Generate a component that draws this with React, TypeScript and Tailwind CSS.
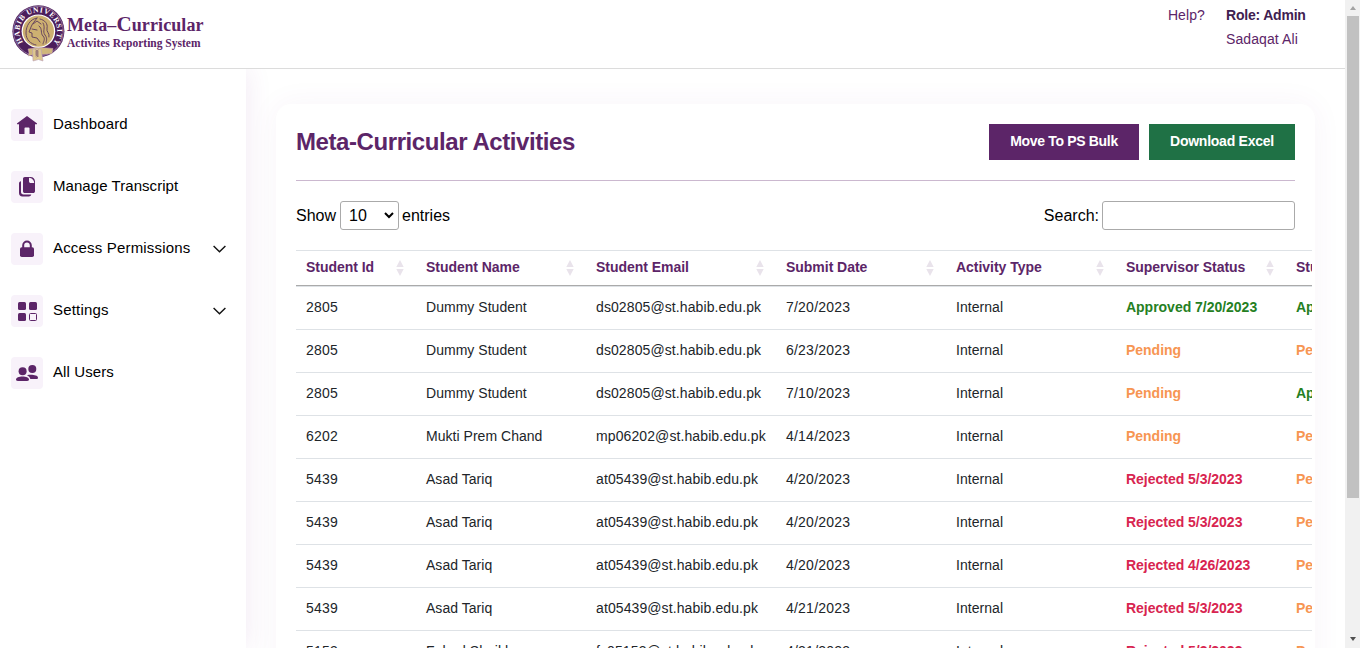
import React from "react";

const activities = [
  ["2805", "Dummy Student", "ds02805@st.habib.edu.pk", "7/20/2023", "Approved 7/20/2023", "Approved"],
  ["2805", "Dummy Student", "ds02805@st.habib.edu.pk", "6/23/2023", "Pending", "Pending"],
  ["2805", "Dummy Student", "ds02805@st.habib.edu.pk", "7/10/2023", "Pending", "Approved"],
  ["6202", "Mukti Prem Chand", "mp06202@st.habib.edu.pk", "4/14/2023", "Pending", "Pending"],
  ["5439", "Asad Tariq", "at05439@st.habib.edu.pk", "4/20/2023", "Rejected 5/3/2023", "Pending"],
  ["5439", "Asad Tariq", "at05439@st.habib.edu.pk", "4/20/2023", "Rejected 5/3/2023", "Pending"],
  ["5439", "Asad Tariq", "at05439@st.habib.edu.pk", "4/20/2023", "Rejected 4/26/2023", "Pending"],
  ["5439", "Asad Tariq", "at05439@st.habib.edu.pk", "4/21/2023", "Rejected 5/3/2023", "Pending"],
  ["5153", "Fahad Shaikh", "fs05153@st.habib.edu.pk", "4/21/2023", "Rejected 5/3/2023", "Pending"],
];

const headings = ["Student Id", "Student Name", "Student Email", "Submit Date", "Activity Type", "Supervisor Status", "Student"];
const columns = "grid grid-cols-[120px_170px_190px_170px_170px_170px_170px]";

function statusColor(status: string) {
  if (status.startsWith("Approved")) return "text-[#25801f]";
  if (status.startsWith("Rejected")) return "text-[#d82450]";
  return "text-[#f79552]";
}

function Crest() {
  return (
    <svg width="54" height="60" viewBox="0 0 54 60" className="shrink-0">
      <defs>
        <path id="crest-ring" d="M11.2 38.2 A18.8 18.8 0 1 1 41.6 38.2" />
      </defs>
      <circle cx="26.4" cy="27.2" r="26" fill="#4c1e5b" />
      <circle cx="26.4" cy="27.2" r="24.9" fill="none" stroke="#cdb7d4" strokeWidth=".5" />
      <circle cx="26.4" cy="27.2" r="16.8" fill="#fff" />
      <circle cx="26.4" cy="27.2" r="15.6" fill="#cdb071" />
      <text fill="#fff" fontSize="7.6" fontFamily="Liberation Serif, serif" fontWeight="700" letterSpacing=".6">
        <textPath href="#crest-ring">HABIB UNIVERSITY</textPath>
      </text>
      <g fill="none" stroke="#5c3a5b" strokeWidth=".9" strokeLinecap="round" strokeLinejoin="round">
        <path d="M25 14C18 15 14 22 14 29c0 7 5 11 10 12M25 14c-2 3-5 6-6 9l-2 5 3 1v4l5 1 3 4" />
        <path d="M21 20l4-3 4 3M20 25l5 1M28 15c5 1 8 5 7 9s3 5 2 9M31 19c3 5-1 8 2 12s1 6 1 8M27 22c4 3 1 7 4 10s0 6 0 8" />
      </g>
      <path d="M16 45c8-2 16-1.500 25-.5l-1 5-9 1c-6-.5-11 0-15 1.500l1-3z" fill="#d0b77b" stroke="#c4a0b8" strokeWidth=".5" />
      <path d="M20.500 45h8.500l2 12-4.500-1.500-5.500 1.500z" fill="#dec88f" stroke="#bba0b7" strokeWidth=".6" />
      <path d="M23.500 46l3 2-3 2 3 2-2 1M26.500 46l-3 2 3 2-3 2" stroke="#6a4267" strokeWidth=".6" fill="none" />
    </svg>
  );
}

function NavIcon({ name }: { name: string }) {
  return (
    <span className="flex size-8 shrink-0 items-center justify-center rounded bg-[#f8f2fa]">
      <svg width="32" height="32" viewBox="0 0 32 32" fill="#5c2568">
        {name === "home" && (
          <path d="M16 7 25.800 14.300c.5.4.2 1-.4 1H24V24c0 .7-.4 1-1 1h-4.500v-5.800c0-.5-.3-.8-.8-.8h-3.400c-.5 0-.8.3-.8.8V25H9c-.7 0-1-.4-1-1v-8.700H6.600c-.6 0-.9-.6-.4-1z" />
        )}
        {name === "documents" && (
          <>
            <path d="M13.800 6H18v4.200c0 1.100.7 1.800 1.800 1.800H24v8.200c0 1-.8 1.800-1.800 1.800h-8.400c-1 0-1.800-.8-1.800-1.800V7.800c0-1 .8-1.800 1.800-1.800z" />
            <path d="M18 6h1.500c2.600 0 4.500 2 4.500 4.500V12h-.8c0-2.600-2.200-4.900-5.200-5.200z" />
            <path d="M10 10.200v10.900c0 1.500 1 2.500 2.500 2.500h7.800c-.3 1.300-1.200 2-2.500 2h-6.300c-2.200 0-3.500-1.300-3.500-3.500v-9.700c0-1.200.7-2 2-2.200z" />
          </>
        )}
        {name === "lock" && (
          <>
            <path d="M12.200 15.500v-3.200a3.800 3.800 0 0 1 7.600 0v3.200" fill="none" stroke="#5c2568" strokeWidth="2" />
            <rect x="9" y="14.300" width="14" height="9.700" rx="1.800" />
          </>
        )}
        {name === "grid" && (
          <>
            <rect x="7" y="7" width="8" height="8" rx="1.500" />
            <rect x="18" y="7" width="8" height="8" rx="1.500" />
            <rect x="7" y="18" width="8" height="8" rx="1.500" />
            <rect x="18.500" y="18.500" width="7" height="7" rx="1" fill="none" stroke="#5c2568" />
          </>
        )}
        {name === "users" && (
          <>
            <circle cx="11.600" cy="14.300" r="4" />
            <circle cx="21.300" cy="12" r="4" />
            <path d="M5 22.600c0-2 3-3.100 6.500-3.100s6.500 1.100 6.500 3.100c0 1-.7 1.400-1.800 1.400H6.800C5.700 24 5 23.600 5 22.600z" />
            <path d="M16 18.300c3.500-1 11-.4 11 2.500 0 .8-.6 1.200-1.500 1.200h-6.200c-.4-1.700-1.600-2.900-3.300-3.700z" />
          </>
        )}
      </svg>
    </span>
  );
}

const nav = [
  { label: "Dashboard", icon: "home", tracking: "tracking-[0.16px]" },
  { label: "Manage Transcript", icon: "documents", tracking: "tracking-[0.06px]" },
  { label: "Access Permissions", icon: "lock", expands: true, tracking: "tracking-[0.18px]" },
  { label: "Settings", icon: "grid", expands: true, tracking: "tracking-[0.2px]" },
  { label: "All Users", icon: "users", tracking: "tracking-[0.1px]" },
];

export default function App() {
  return (
    <div className="flex h-[648px] w-[1360px] overflow-hidden bg-white font-['Liberation_Sans',sans-serif] text-black">
      <div className="flex w-[1345px] flex-col">
        <header className="flex h-[69px] shrink-0 justify-between border-b border-[#dcdcdc] pl-3">
          <div className="flex pt-[4px]">
            <Crest />
            <div className="pl-px pt-[9px] font-['Liberation_Serif',serif] font-bold text-[#5c2568]">
              <div className="whitespace-nowrap text-[18px] leading-[22px] tracking-[0.1px]">
                Meta–<span className="text-[21px] leading-[22px]">C</span>urricular
              </div>
              <div className="whitespace-nowrap text-[11.5px] leading-[15px]">Activites Reporting System</div>
            </div>
          </div>
          <div className="flex gap-[21px] whitespace-nowrap pt-[3px] text-sm leading-6 text-[#5c2568]">
            <span className="tracking-[0.1px]">Help?</span>
            <div className="w-[119px]">
              <div className="font-bold tracking-[-0.2px] text-[#402050]">Role: Admin</div>
              <div className="tracking-[0.1px]">Sadaqat Ali</div>
            </div>
          </div>
        </header>
        <div className="flex min-h-0 flex-1 overflow-hidden">
          <nav className="flex w-[246px] shrink-0 flex-col gap-[30px] pl-[11px] pt-10 shadow-[0_0_25px_rgba(130,50,150,0.11)]">
            {nav.map((item) => (
              <a key={item.label} className="flex h-8 items-center text-[15px]">
                <NavIcon name={item.icon} />
                <span className={`flex-1 whitespace-nowrap pb-[2px] pl-[10px] ${item.tracking}`}>{item.label}</span>
                {item.expands && (
                  <svg width="13" height="8" viewBox="0 0 13 8" className="mr-[20px]" fill="none" stroke="#111" strokeWidth="1.4">
                    <path d="m.6.9 5.900 5.900L12.400.9" />
                  </svg>
                )}
              </a>
            ))}
          </nav>
          <main className="min-w-0 flex-1 pl-[30px] pr-[30px] pt-[35px]">
            <section className="h-[700px] w-[1039px] rounded-[15px] bg-white pl-5 pt-5 shadow-[0_0_30px_rgba(120,50,140,0.055)]">
              <div className="flex h-[57px] w-[999px] justify-between border-b border-[#cbb8cf]">
                <h1 className="h-9 whitespace-nowrap text-2xl font-bold leading-9 tracking-[-0.42px] text-[#5c2568]">Meta-Curricular Activities</h1>
                <div className="flex gap-[10px] whitespace-nowrap text-sm font-bold text-white">
                  <button className="h-9 w-[150px] bg-[#5c2568] pb-[2px] tracking-[-0.32px]">Move To PS Bulk</button>
                  <button className="h-9 w-[146px] bg-[#1f7145] pb-[2px] tracking-[-0.25px]">Download Excel</button>
                </div>
              </div>
              <div className="flex w-[999px] items-center justify-between pt-5 text-base">
                <div className="flex items-center">
                  <span className="w-11">Show</span>
                  <span className="flex h-[29px] w-[59px] items-center justify-between rounded-[3px] border border-[#aaa] pl-2 pr-1">
                    10
                    <svg width="10" height="7" viewBox="0 0 10 7" fill="none" stroke="#000" strokeWidth="2">
                      <path d="m1 1 4 4 4-4" />
                    </svg>
                  </span>
                  <span className="pl-[3px]">entries</span>
                </div>
                <label className="flex items-center gap-[3px]">
                  Search:
                  <input className="h-[29px] w-[193px] rounded-[3px] border border-[#aaa]" />
                </label>
              </div>
              <div className="mt-5 w-[1016px] overflow-hidden whitespace-nowrap text-sm">
                <div className={`${columns} h-[36px] w-[1160px] border-b border-t border-b-[#aaa] border-t-[#dee2e6] font-bold text-[#5c2568]`}>
                  {headings.map((heading) => (
                    <div key={heading} className="flex items-center justify-between pl-[10px] pr-[12px]">
                      <span className="pb-[2px] tracking-[-0.03px]">{heading}</span>
                      <svg width="8" height="16" viewBox="0 0 8 16" fill="#e9e3eb" className="shrink-0">
                        <path d="M4 0 7.700 7H.3zM4 16 .3 9h7.400z" />
                      </svg>
                    </div>
                  ))}
                </div>
                <div className="border-t border-[#dee2e6]">
                  {activities.map(([id, name, email, date, supervisor, office], index) => (
                    <div key={index} className={`${columns} h-[43px] w-[1160px] items-center border-b border-[#dee2e6] pb-[2px] text-[#212529]`}>
                      <span className="pl-[10px] tracking-[0.2px]">{id}</span>
                      <span className="pl-[10px] tracking-[0.03px]">{name}</span>
                      <span className="pl-[10px] tracking-[0.1px]">{email}</span>
                      <span className="pl-[10px] tracking-[0.22px]">{date}</span>
                      <span className="pl-[10px] tracking-[0.05px]">Internal</span>
                      <span className={`pl-[10px] font-bold tracking-[-0.02px] ${statusColor(supervisor)}`}>{supervisor}</span>
                      <span className={`pl-[10px] font-bold tracking-[-0.02px] ${statusColor(office)}`}>{office}</span>
                    </div>
                  ))}
                </div>
              </div>
            </section>
          </main>
        </div>
      </div>
      <div className="flex w-[15px] flex-col items-center justify-between bg-[#f1f1f1]">
        <div className="flex flex-col items-center">
          <svg width="15" height="16" viewBox="0 0 15 16" fill="#a3a3a3"><path d="M5 10h6L8 6z" /></svg>
          <div className="ml-px h-[482px] w-3 bg-[#c1c1c1]" />
        </div>
        <svg width="15" height="16" viewBox="0 0 15 16" fill="#505050"><path d="M5 5h6L8 9z" /></svg>
      </div>
    </div>
  );
}
